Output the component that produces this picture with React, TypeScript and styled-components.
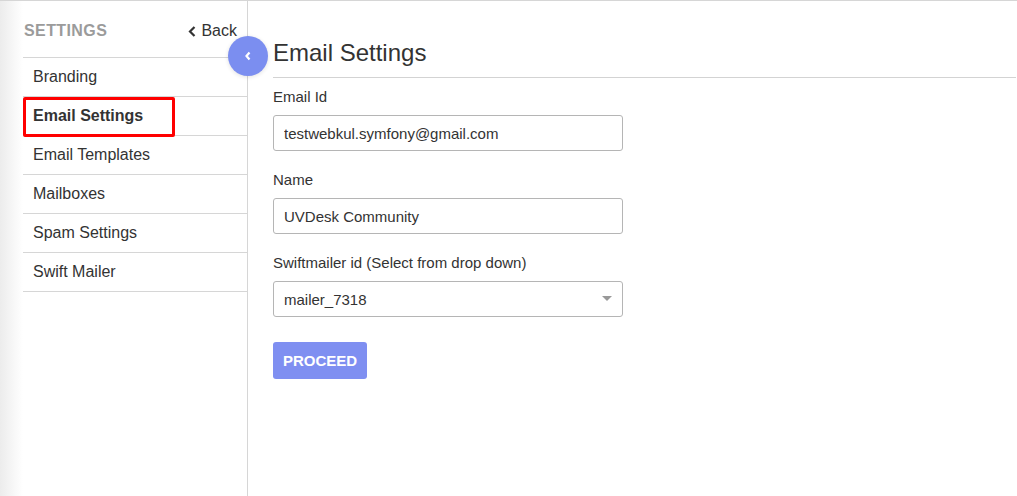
import styled, { createGlobalStyle } from 'styled-components';

const GlobalStyle = createGlobalStyle`
  html, body {
    margin: 0;
    padding: 0;
    background: #fff;
  }
  body {
    font-family: "Liberation Sans", Arial, sans-serif;
    color: #333;
  }
`;

const Page = styled.div`
  display: flex;
  height: 496px;
  box-sizing: border-box;
  border-top: 1px solid #d6d6d6;
  overflow: hidden;
`;

const Shade = styled.div`
  width: 23px;
  flex-shrink: 0;
  background: linear-gradient(to right, #ececec, #ffffff);
`;

const Sidebar = styled.aside`
  position: relative;
  width: 224px;
  flex-shrink: 0;
  border-right: 1px solid #d6d6d6;
`;

const SideHeader = styled.div`
  height: 52px;
  display: flex;
  align-items: center;
  justify-content: space-between;
  padding: 4px 10px 0 1px;
  border-bottom: 1px solid #d6d6d6;
`;

const SideTitle = styled.span`
  font-size: 16px;
  font-weight: bold;
  letter-spacing: 0.4px;
  color: #9b9b9b;
  text-transform: uppercase;
`;

const BackLink = styled.a`
  display: flex;
  align-items: center;
  gap: 5px;
  font-size: 16px;
  color: #333;
  text-decoration: none;
  cursor: pointer;
`;

const NavList = styled.ul`
  list-style: none;
  margin: 0;
  padding: 0;
`;

const NavItem = styled.li<{ $active?: boolean }>`
  position: relative;
  height: 38px;
  line-height: 38px;
  padding-left: 10px;
  border-bottom: 1px solid #d6d6d6;
  font-size: 16px;
  font-weight: ${p => (p.$active ? 'bold' : 'normal')};
  color: #333;
  cursor: pointer;
`;

const Highlight = styled.span`
  position: absolute;
  left: 0;
  top: 0;
  width: 152px;
  height: 40px;
  box-sizing: border-box;
  border: 3px solid #ff0000;
  border-radius: 2px;
  pointer-events: none;
`;

const Toggle = styled.button`
  position: absolute;
  left: 205px;
  top: 35px;
  width: 40px;
  height: 40px;
  border: none;
  border-radius: 50%;
  background: #7b8ef0;
  box-shadow: 0 1px 4px rgba(0, 0, 0, 0.12);
  display: flex;
  align-items: center;
  justify-content: center;
  padding: 0;
  cursor: pointer;
`;

const Main = styled.main`
  flex: 1;
  padding: 38px 1px 0 25px;
`;

const Title = styled.h1`
  margin: 0;
  font-size: 24px;
  font-weight: normal;
  line-height: 27px;
  color: #333;
  padding-bottom: 11px;
  border-bottom: 1px solid #d3d3d3;
`;

const Form = styled.form`
  padding-top: 10px;
`;

const Field = styled.div`
  margin-bottom: 20px;
`;

const Label = styled.label`
  display: block;
  font-size: 15px;
  line-height: 17px;
  color: #333;
  margin-bottom: 10px;
`;

const Input = styled.input`
  display: block;
  width: 350px;
  height: 36px;
  box-sizing: border-box;
  padding: 0 10px;
  border: 1px solid #b5b5b5;
  border-radius: 3px;
  font-family: "Liberation Sans", Arial, sans-serif;
  font-size: 15px;
  color: #333;
  outline: none;
`;

const SelectWrap = styled.div`
  position: relative;
  width: 350px;
`;

const Select = styled.select`
  display: block;
  width: 350px;
  height: 36px;
  box-sizing: border-box;
  padding: 0 10px;
  border: 1px solid #b5b5b5;
  border-radius: 3px;
  background: #fff;
  font-family: "Liberation Sans", Arial, sans-serif;
  font-size: 15px;
  color: #333;
  appearance: none;
  outline: none;
`;

const Caret = styled.span`
  position: absolute;
  right: 11px;
  top: 15px;
  width: 0;
  height: 0;
  border-left: 5px solid transparent;
  border-right: 5px solid transparent;
  border-top: 5px solid #999;
  pointer-events: none;
`;

const Proceed = styled.button`
  margin-top: 5px;
  height: 37px;
  padding: 0 10px;
  border: none;
  border-radius: 3px;
  background: #7f8ff1;
  color: #fff;
  font-family: "Liberation Sans", Arial, sans-serif;
  font-size: 15px;
  font-weight: bold;
  cursor: pointer;
`;

const items = ['Branding', 'Email Settings', 'Email Templates', 'Mailboxes', 'Spam Settings', 'Swift Mailer'];

export default function App() {
  return (
    <>
      <GlobalStyle />
      <Page>
        <Shade />
        <Sidebar>
          <SideHeader>
            <SideTitle>Settings</SideTitle>
            <BackLink>
              <svg width="8" height="11" viewBox="0 0 8 11">
                <polyline points="6.5,1 2,5.5 6.5,10" fill="none" stroke="#333" strokeWidth="2.2" />
              </svg>
              Back
            </BackLink>
          </SideHeader>
          <NavList>
            {items.map(item => (
              <NavItem key={item} $active={item === 'Email Settings'}>
                {item}
                {item === 'Email Settings' && <Highlight />}
              </NavItem>
            ))}
          </NavList>
          <Toggle aria-label="Collapse">
            <svg width="8" height="10" viewBox="0 0 8 10">
              <polyline points="5.5,1.5 2.5,5 5.5,8.5" fill="none" stroke="#fff" strokeWidth="2.2" />
            </svg>
          </Toggle>
        </Sidebar>
        <Main>
          <Title>Email Settings</Title>
          <Form onSubmit={e => e.preventDefault()}>
            <Field>
              <Label>Email Id</Label>
              <Input defaultValue="testwebkul.symfony@gmail.com" />
            </Field>
            <Field>
              <Label>Name</Label>
              <Input defaultValue="UVDesk Community" />
            </Field>
            <Field>
              <Label>Swiftmailer id (Select from drop down)</Label>
              <SelectWrap>
                <Select defaultValue="mailer_7318">
                  <option value="mailer_7318">mailer_7318</option>
                </Select>
                <Caret />
              </SelectWrap>
            </Field>
            <Proceed type="submit">PROCEED</Proceed>
          </Form>
        </Main>
      </Page>
    </>
  );
}
